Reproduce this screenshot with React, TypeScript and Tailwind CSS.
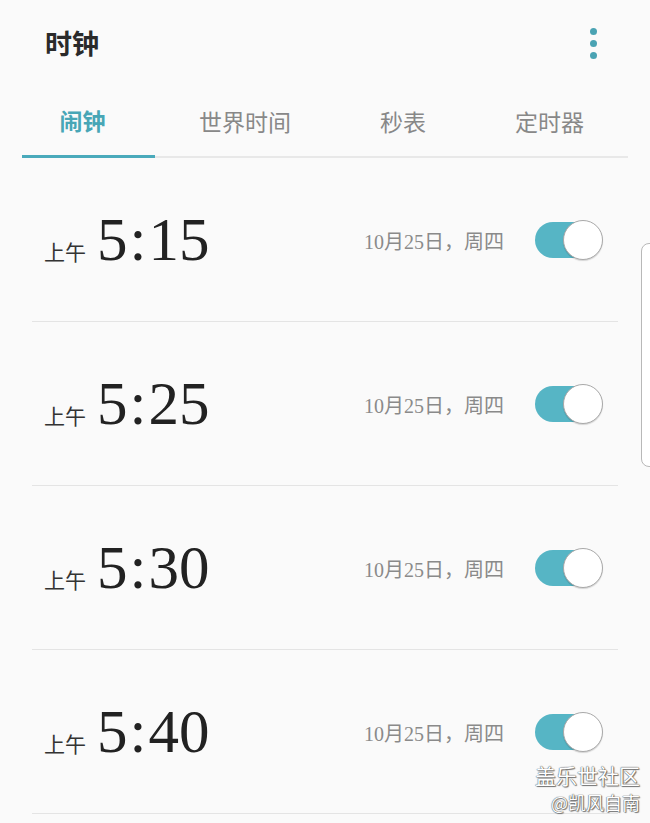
import React from "react";

const alarms = [
  { hour: "5", min: "15", date: "10月25日，周四" },
  { hour: "5", min: "25", date: "10月25日，周四" },
  { hour: "5", min: "30", date: "10月25日，周四" },
  { hour: "5", min: "40", date: "10月25日，周四" },
];

const tabs = [
  { label: "闹钟", width: "w-[133px]", active: true },
  { label: "世界时间", width: "w-[180px]", active: false },
  { label: "秒表", width: "w-[136px]", active: false },
  { label: "定时器", width: "w-[157px]", active: false },
];

const Toggle = function () {
  return (
    <div className="relative h-[40px] w-[68px] flex items-center">
      <div className="h-[36px] w-[60px] rounded-full bg-[#56b5c5]" />
      <div className="absolute right-0 top-0 h-[40px] w-[40px] rounded-full bg-white border border-[#a9a9a9] shadow-[0_1px_1px_rgba(0,0,0,0.15)]" />
    </div>
  );
};

const AlarmRow = function ({
  hour,
  min,
  date,
}: {
  hour: string;
  min: string;
  date: string;
}) {
  return (
    <div className="h-[164px] mx-[32px] border-b border-[#e4e4e4] flex items-center pl-[12px] pr-[15px]">
      <div className="flex items-baseline flex-1">
        <span className="text-[21px] text-[#333] font-['Noto_Sans_CJK_SC',sans-serif] mr-[11px]">
          上午
        </span>
        <span className="text-[61px] leading-none text-[#222] font-['Liberation_Serif',serif]">
          {hour}
          <span className="mx-[2px]">:</span>
          {min}
        </span>
      </div>
      <span className="text-[20px] text-[#8a8a8a] font-['Liberation_Serif','Noto_Sans_CJK_SC',serif] mr-[31px] mt-[4px]">
        {date}
      </span>
      <Toggle />
    </div>
  );
};

export default function App() {
  return (
    <div className="relative w-[650px] h-[823px] overflow-hidden bg-[#fafafa] font-['Noto_Sans_CJK_SC',sans-serif]">
      <div className="h-[88px] flex items-center justify-between pl-[45px] pr-[53px] pb-[2px]">
        <span className="text-[27px] font-bold text-[#2a2a2a]">时钟</span>
        <div className="flex flex-col gap-[5px] items-center">
          <div className="h-[7px] w-[7px] rounded-full bg-[#4aa3b3]" />
          <div className="h-[7px] w-[7px] rounded-full bg-[#4aa3b3]" />
          <div className="h-[7px] w-[7px] rounded-full bg-[#4aa3b3]" />
        </div>
      </div>
      <div className="mx-[22px] flex border-b-2 border-[#e8e8e8] h-[70px]">
        {tabs.map((tab) => (
          <div
            key={tab.label}
            className={`${tab.width} flex items-center justify-center -mb-[2px] ${
              tab.active ? "border-b-[3px] border-[#4aaabb]" : ""
            }`}
          >
            <span
              className={`text-[23px] pb-[3px] ${
                tab.active ? "text-[#48a6b6] font-bold pr-[12px]" : "text-[#888]"
              }`}
            >
              {tab.label}
            </span>
          </div>
        ))}
      </div>
      <div className="flex flex-col">
        {alarms.map((a) => (
          <AlarmRow key={a.min} hour={a.hour} min={a.min} date={a.date} />
        ))}
      </div>
      <div className="absolute left-[641px] top-[243px] h-[224px] w-[20px] rounded-[8px] border border-[#b8b8b8] bg-white" />
      <div className="absolute right-[10px] bottom-[12px] flex flex-col items-end leading-none">
        <span className="text-[21px] text-white [text-shadow:0_0_1px_#555,0_0_1px_#555,1px_1px_1px_#777]">
          盖乐世社区
        </span>
        <span className="text-[18px] text-white mt-[7px] [text-shadow:0_0_1px_#555,0_0_1px_#555,1px_1px_1px_#777]">
          @凯风自南
        </span>
      </div>
    </div>
  );
}
